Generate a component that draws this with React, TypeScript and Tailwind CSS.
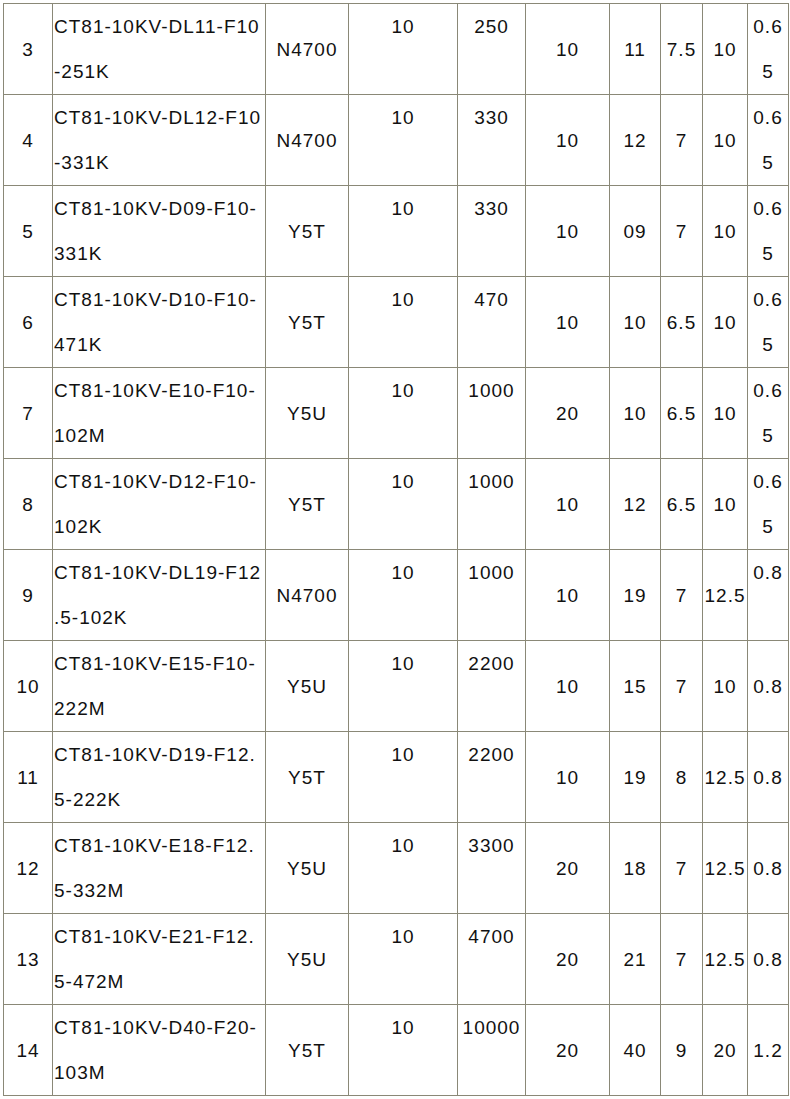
import React from "react";

type Row = {
  n: string;
  model: [string, string];
  mat: string;
  a: string;
  b: string;
  c: string;
  d: string;
  e: string;
  f: string;
  g: string[];
  gTop?: boolean;
};

const rows: Row[] = [
  { n: "3", model: ["CT81-10KV-DL11-F10", "-251K"], mat: "N4700", a: "10", b: "250", c: "10", d: "11", e: "7.5", f: "10", g: ["0.6", "5"] },
  { n: "4", model: ["CT81-10KV-DL12-F10", "-331K"], mat: "N4700", a: "10", b: "330", c: "10", d: "12", e: "7", f: "10", g: ["0.6", "5"] },
  { n: "5", model: ["CT81-10KV-D09-F10-", "331K"], mat: "Y5T", a: "10", b: "330", c: "10", d: "09", e: "7", f: "10", g: ["0.6", "5"] },
  { n: "6", model: ["CT81-10KV-D10-F10-", "471K"], mat: "Y5T", a: "10", b: "470", c: "10", d: "10", e: "6.5", f: "10", g: ["0.6", "5"] },
  { n: "7", model: ["CT81-10KV-E10-F10-", "102M"], mat: "Y5U", a: "10", b: "1000", c: "20", d: "10", e: "6.5", f: "10", g: ["0.6", "5"] },
  { n: "8", model: ["CT81-10KV-D12-F10-", "102K"], mat: "Y5T", a: "10", b: "1000", c: "10", d: "12", e: "6.5", f: "10", g: ["0.6", "5"] },
  { n: "9", model: ["CT81-10KV-DL19-F12", ".5-102K"], mat: "N4700", a: "10", b: "1000", c: "10", d: "19", e: "7", f: "12.5", g: ["0.8"], gTop: true },
  { n: "10", model: ["CT81-10KV-E15-F10-", "222M"], mat: "Y5U", a: "10", b: "2200", c: "10", d: "15", e: "7", f: "10", g: ["0.8"] },
  { n: "11", model: ["CT81-10KV-D19-F12.", "5-222K"], mat: "Y5T", a: "10", b: "2200", c: "10", d: "19", e: "8", f: "12.5", g: ["0.8"] },
  { n: "12", model: ["CT81-10KV-E18-F12.", "5-332M"], mat: "Y5U", a: "10", b: "3300", c: "20", d: "18", e: "7", f: "12.5", g: ["0.8"] },
  { n: "13", model: ["CT81-10KV-E21-F12.", "5-472M"], mat: "Y5U", a: "10", b: "4700", c: "20", d: "21", e: "7", f: "12.5", g: ["0.8"] },
  { n: "14", model: ["CT81-10KV-D40-F20-", "103M"], mat: "Y5T", a: "10", b: "10000", c: "20", d: "40", e: "9", f: "20", g: ["1.2"] },
];

const cell = "h-[91px] border-r border-b border-[#8a8877] leading-[45px] whitespace-nowrap overflow-hidden";
const mid = `${cell} flex items-center justify-center text-center`;
const top = `${cell} flex flex-col items-center justify-start text-center`;

export default function App() {
  return (
    <div className="min-h-[1099px] w-[790px] bg-white pt-[3px] pl-[3px]">
      <div
        className="grid w-max grid-cols-[49px_213px_83px_109px_68px_84px_51px_42px_45px_41px] border-l border-t border-[#8a8877] text-[19px] tracking-[1px] text-[#111]"
        style={{ fontFamily: '"Liberation Sans", Arial, sans-serif' }}
      >
        {rows.map((r) => (
          <React.Fragment key={r.n}>
            <div className={mid}>{r.n}</div>
            <div className={`${cell} flex flex-col justify-center pl-[1px]`}>
              <span>{r.model[0]}</span>
              <span>{r.model[1]}</span>
            </div>
            <div className={mid}>{r.mat}</div>
            <div className={top}>{r.a}</div>
            <div className={top}>{r.b}</div>
            <div className={mid}>{r.c}</div>
            <div className={mid}>{r.d}</div>
            <div className={mid}>{r.e}</div>
            <div className={mid}>{r.f}</div>
            {r.g.length > 1 || r.gTop ? (
              <div className={top}>
                {r.g.map((t, i) => (
                  <span key={i}>{t}</span>
                ))}
              </div>
            ) : (
              <div className={mid}>{r.g[0]}</div>
            )}
          </React.Fragment>
        ))}
      </div>
    </div>
  );
}
